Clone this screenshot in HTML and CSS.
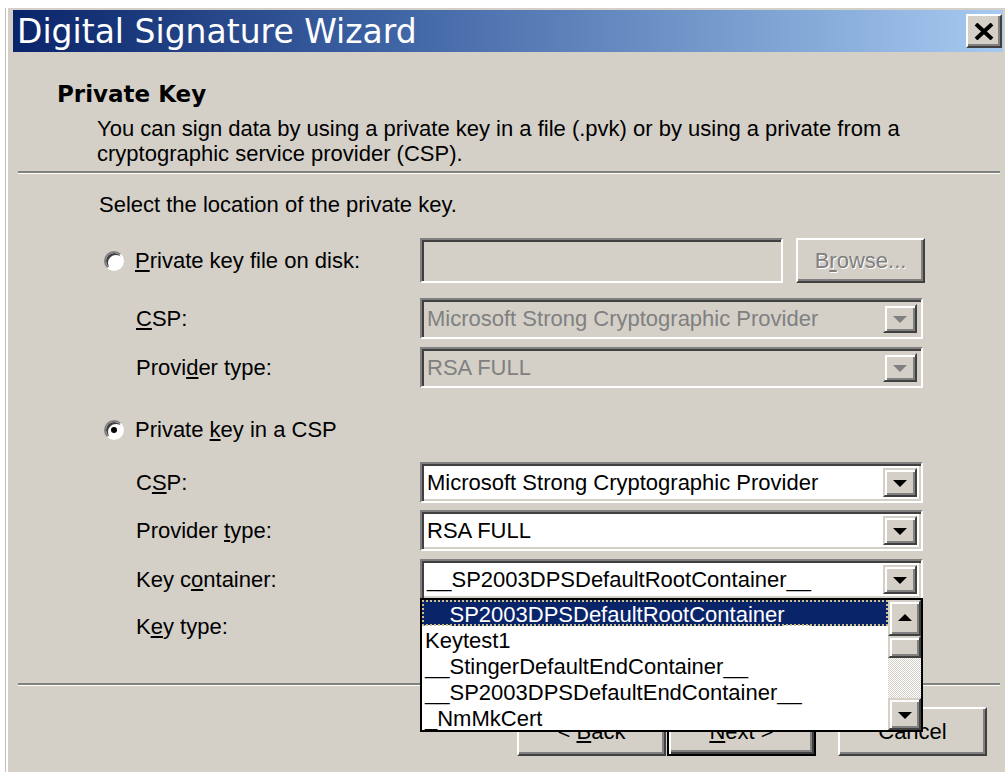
FILE: index.html
```html
<!DOCTYPE html>
<html lang="en">
<head>
<meta charset="utf-8">
<title>Digital Signature Wizard</title>
<link rel="stylesheet" href="styles.css">
</head>
<body>
<div class="window">
  <div class="titlebar">
    <span class="title">Digital Signature Wizard</span>
    <button class="close-btn" type="button" aria-label="Close">
      <svg width="20" height="17" viewBox="0 0 20 17"><path d="M2 1 L18 16 M18 1 L2 16" stroke="#000" stroke-width="4"/></svg>
    </button>
  </div>

  <div class="page-header">
    <div class="page-title">Private Key</div>
    <div class="page-desc">You can sign data by using a private key in a file (.pvk) or by using a private from a<br>cryptographic service provider (CSP).</div>
  </div>
  <div class="etched"></div>

  <div class="form">
    <p class="intro">Select the location of the private key.</p>

    <div class="row row-file">
      <label class="option"><span class="radio"></span><span><u>P</u>rivate key file on disk:</span></label>
      <div class="file-pick">
        <div class="textbox is-disabled"></div>
        <button class="btn btn-browse is-disabled" type="button">B<u>r</u>owse...</button>
      </div>
    </div>
    <div class="row row-sub row-gap-15">
      <span class="field-label"><u>C</u>SP:</span>
      <div class="combo is-disabled"><span class="combo-text">Microsoft Strong Cryptographic Provider</span><span class="drop-btn"><i class="arrow-down"></i></span></div>
    </div>
    <div class="row row-sub row-gap-8">
      <span class="field-label">Provi<u>d</u>er type:</span>
      <div class="combo is-disabled"><span class="combo-text">RSA FULL</span><span class="drop-btn"><i class="arrow-down"></i></span></div>
    </div>

    <div class="row row-csp">
      <label class="option"><span class="radio is-checked"></span><span>Private <u>k</u>ey in a CSP</span></label>
    </div>
    <div class="row row-sub row-gap-19">
      <span class="field-label">C<u>S</u>P:</span>
      <div class="combo"><span class="combo-text">Microsoft Strong Cryptographic Provider</span><span class="drop-btn"><i class="arrow-down"></i></span></div>
    </div>
    <div class="row row-sub row-gap-7">
      <span class="field-label">Provider <u>t</u>ype:</span>
      <div class="combo"><span class="combo-text">RSA FULL</span><span class="drop-btn"><i class="arrow-down"></i></span></div>
    </div>
    <div class="row row-sub row-gap-8">
      <span class="field-label">Key c<u>o</u>ntainer:</span>
      <div class="combo is-open"><span class="combo-text">__SP2003DPSDefaultRootContainer__</span><span class="drop-btn"><i class="arrow-down"></i></span>
        <div class="dropdown">
          <ul class="list">
            <li class="is-selected">__SP2003DPSDefaultRootContainer__</li>
            <li>Keytest1</li>
            <li>__StingerDefaultEndContainer__</li>
            <li>__SP2003DPSDefaultEndContainer__</li>
            <li>_NmMkCert</li>
          </ul>
          <div class="vscroll">
            <span class="sb-btn sb-up"><i class="arrow-up"></i></span>
            <span class="sb-thumb"></span>
            <span class="sb-track"></span>
            <span class="sb-btn sb-down"><i class="arrow-down"></i></span>
          </div>
        </div>
      </div>
    </div>
    <div class="row row-sub row-gap-6">
      <span class="field-label">K<u>e</u>y type:</span>
    </div>
  </div>

  <div class="etched etched-bottom"></div>
  <div class="buttons">
    <button class="btn" type="button">&lt; <u>B</u>ack</button>
    <button class="btn btn-default" type="button"><u>N</u>ext &gt;</button>
    <button class="btn btn-cancel" type="button">Cancel</button>
  </div>
</div>
</body>
</html>
```
FILE: styles.css
```css
* { box-sizing: border-box; }

html, body {
  margin: 0;
  padding: 0;
}

body {
  width: 1005px;
  height: 772px;
  overflow: hidden;
  background: #fff;
  font-family: "Liberation Sans", Arial, sans-serif;
  font-size: 22px;
  color: #000;
}

u { text-decoration: underline; text-underline-offset: 2px; text-decoration-thickness: 2px; }

/* ---- window frame ---- */
.window {
  margin: 8px 0 0 5px;
  height: 764px;
  background: #d4d0c8;
  border-left: 1px solid #c4c1ba;
  box-shadow: inset 2px 0 #fff;
  padding: 2px 0 0 7px;
}

.titlebar {
  height: 42px;
  margin-right: 2px;
  padding: 0 1px 0 4px;
  display: flex;
  align-items: center;
  justify-content: space-between;
  background: linear-gradient(to right, #0a246a 0%, #3a5fa0 35%, #a6caf0 100%);
}

.title {
  font-family: "DejaVu Sans", sans-serif;
  font-size: 33px;
  line-height: 1;
  color: #fff;
  white-space: nowrap;
}

.close-btn {
  width: 36px;
  height: 34px;
  padding: 0;
  display: flex;
  align-items: center;
  justify-content: center;
  background: #d4d0c8;
  border: 2px solid;
  border-color: #fff #404040 #404040 #fff;
  box-shadow: inset -2px -2px #808080;
}

/* ---- page header ---- */
.page-header {
  padding: 28px 0 0 44px;
}

.page-title {
  font-family: "DejaVu Sans", sans-serif;
  font-size: 23px;
  font-weight: bold;
  line-height: 28px;
}

.page-desc {
  margin: 8px 0 0 40px;
  font-size: 22px;
  line-height: 25px;
}

.etched {
  height: 3px;
  margin: 5px 5px 0 5px;
  border-top: 2px solid #808080;
  border-bottom: 1px solid #fff;
}

.etched-bottom { margin-top: 36px; }

/* ---- form ---- */
.form {
  padding: 18px 0 0 86px;
}

.intro {
  margin: 0;
  line-height: 26px;
}

.row {
  display: flex;
  align-items: center;
  padding-left: 5px;
  height: 41px;
}

.row-file { margin-top: 20px; height: 45px; }
.row-csp { margin-top: 29px; height: 26px; }
.row-gap-6 { margin-top: 6px; }
.row-gap-7 { margin-top: 7px; }
.row-gap-8 { margin-top: 8px; }
.row-gap-15 { margin-top: 15px; }
.row-gap-19 { margin-top: 19px; }

.option {
  width: 316px;
  flex: none;
  display: flex;
  align-items: center;
  gap: 11px;
  white-space: nowrap;
}

.field-label {
  width: 316px;
  flex: none;
  padding-left: 32px;
  white-space: nowrap;
}

/* radio buttons */
.radio {
  position: relative;
  width: 20px;
  height: 20px;
  flex: none;
  border-radius: 50%;
  background: #fff;
  border: 2px solid;
  border-color: #808080 #fff #fff #808080;
  box-shadow: inset 2px 2px 0 #404040, 0 0 0 1px #d4d0c8;
}

.radio.is-checked::after {
  content: "";
  position: absolute;
  left: 5px;
  top: 5px;
  width: 6px;
  height: 6px;
  border-radius: 50%;
  background: #000;
}

/* file picker */
.file-pick {
  display: flex;
  gap: 13px;
  height: 45px;
}

.textbox {
  width: 363px;
  height: 45px;
  background: #fff;
  border: 2px solid;
  border-color: #808080 #fff #fff #808080;
  box-shadow: inset 2px 2px #404040, inset -2px -2px #d4d0c8;
}

.textbox.is-disabled { background: #d4d0c8; }

/* push buttons */
.btn {
  width: 149px;
  height: 49px;
  padding: 0;
  font-family: inherit;
  font-size: 22px;
  color: #000;
  background: #d4d0c8;
  border: 2px solid;
  border-color: #fff #404040 #404040 #fff;
  box-shadow: inset -2px -2px #808080;
}

.btn-browse {
  width: 129px;
  height: 45px;
}

.btn.is-disabled {
  color: #808080;
  text-shadow: 1px 1px 0 #fff;
}

.btn-default {
  border: 2px solid #000;
  box-shadow: inset 2px 2px #fff, inset -2px -2px #404040, inset -4px -4px #808080;
}

.btn-cancel { margin-left: 21px; }

/* combo boxes */
.combo {
  position: relative;
  width: 503px;
  height: 41px;
  display: flex;
  align-items: stretch;
  padding: 4px;
  padding-left: 2px;
  background: #fff;
  border: 2px solid;
  border-color: #808080 #fff #fff #808080;
  box-shadow: inset 2px 2px #404040, inset -2px -2px #d4d0c8;
}

.combo.is-disabled { background: #d4d0c8; color: #808080; }

.combo-text {
  flex: 1;
  padding-left: 3px;
  display: flex;
  align-items: center;
  white-space: nowrap;
  overflow: hidden;
}

.drop-btn {
  width: 34px;
  display: flex;
  align-items: center;
  justify-content: center;
  background: #d4d0c8;
  border: 2px solid;
  border-color: #d4d0c8 #404040 #404040 #d4d0c8;
  box-shadow: inset 2px 2px #fff, inset -2px -2px #808080;
}

.arrow-down,
.arrow-up {
  width: 0;
  height: 0;
  border-left: 7px solid transparent;
  border-right: 7px solid transparent;
}

.arrow-down { border-top: 7px solid #000; margin-top: 2px; }
.arrow-up { border-bottom: 7px solid #000; margin-bottom: 2px; }
.is-disabled .arrow-down { border-top-color: #808080; }

/* open list of the key container combo */
.dropdown {
  position: absolute;
  left: -2px;
  top: 100%;
  z-index: 5;
  width: 503px;
  height: 134px;
  display: flex;
  background: #fff;
  border: 2px solid #000;
  color: #000;
}

.list {
  flex: 1;
  margin: 0;
  padding: 0;
  list-style: none;
  overflow: hidden;
}

.list li {
  height: 26px;
  line-height: 26px;
  padding: 2px 0 0 3px;
  white-space: nowrap;
}

.list li.is-selected {
  background: #0a246a;
  color: #fff;
  outline: 2px dotted #cfc08a;
  outline-offset: -2px;
}

.vscroll {
  width: 33px;
  display: flex;
  flex-direction: column;
}

.sb-btn,
.sb-thumb {
  display: flex;
  align-items: center;
  justify-content: center;
  background: #d4d0c8;
  border: 2px solid;
  border-color: #d4d0c8 #404040 #404040 #d4d0c8;
  box-shadow: inset 2px 2px #fff, inset -2px -2px #808080;
}

.sb-up { height: 36px; }
.sb-thumb { height: 22px; }
.sb-down { height: 32px; }

.sb-track {
  flex: 1;
  background: repeating-conic-gradient(#fff 0 25%, #d4d0c8 0 50%) 0 0 / 2px 2px;
}

/* wizard buttons */
.buttons {
  display: flex;
  justify-content: flex-end;
  gap: 1px;
  margin-top: 21px;
  padding-right: 18px;
}
```
